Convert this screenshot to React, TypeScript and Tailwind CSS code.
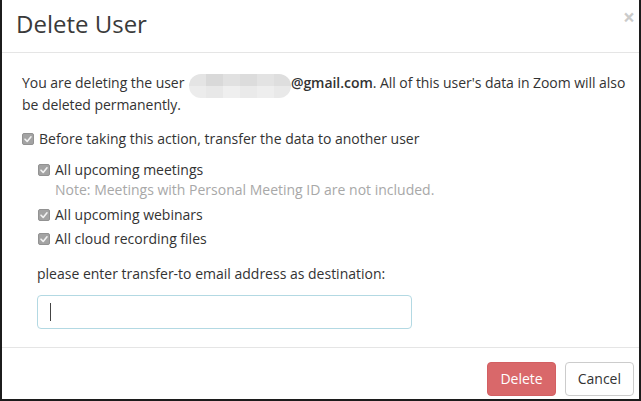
import { ReactNode } from 'react';

function Check({ children }: { children: ReactNode }) {
  return (
    <div className="flex items-center h-[20px]">
      <span className="w-[12px] h-[12px] rounded-[2px] bg-[#a3a3a3] border border-[#929292] flex items-center justify-center shrink-0">
        <svg width="10" height="10" viewBox="0 0 10 10">
          <polyline points="2,5.2 4.2,7.4 8,2.8" fill="none" stroke="#f2f2f2" strokeWidth="1.6" strokeLinecap="round" strokeLinejoin="round" />
        </svg>
      </span>
      <span className="ml-[5px]">{children}</span>
    </div>
  );
}

// blurred e-mail address
function BlurPill() {
  const top = ['bg-[#e4e4e4]', 'bg-[#d9d9d9]', 'bg-[#e1e1e1]', 'bg-[#dcdcdc]', 'bg-[#e3e3e3]', 'bg-[#dedede]'];
  const bottom = ['bg-[#ececec]', 'bg-[#e8e8e8]', 'bg-[#efefef]', 'bg-[#eaeaea]', 'bg-[#eeeeee]', 'bg-[#e9e9e9]'];
  return (
    <span className="inline-block align-[-7px] -my-[3px] ml-[1px] w-[102px] h-[24px] rounded-full overflow-hidden">
      <span className="flex h-1/2">
        {top.map((c, i) => (
          <span key={i} className={`flex-1 ${c}`} />
        ))}
      </span>
      <span className="flex h-1/2">
        {bottom.map((c, i) => (
          <span key={i} className={`flex-1 ${c}`} />
        ))}
      </span>
    </span>
  );
}

export default function App() {
  return (
    <div className="w-[641px] h-[401px] bg-white border-x-2 border-b-2 border-[#1c1c1c] flex flex-col font-['Open_Sans',sans-serif] text-[14px] text-[#333]">
      {/* Header */}
      <div className="h-[53px] shrink-0 border-b border-[#e5e5e5] flex justify-between items-start pl-[14px] pr-[4px]">
        <h4 className="pt-[6px] text-[24px] leading-[36px] text-[#3a3a3a]">Delete User</h4>
        <span className="mt-[7px] text-[21px] leading-[21px] font-bold text-black opacity-20">×</span>
      </div>

      {/* Body */}
      <div className="flex-1 pt-[20px] pl-[20px] pr-[4px]">
        <p className="leading-[20px] tracking-[-0.05px]">
          You are deleting the user <BlurPill />
          <span className="font-semibold">@gmail.com</span>. All of this user's data in Zoom will also be deleted permanently.
        </p>

        <div className="mt-[14px] leading-[20px]">
          <Check>Before taking this action, transfer the data to another user</Check>
          <div className="ml-[16px] mt-[11px]">
            <Check>All upcoming meetings</Check>
            <div className="pl-[17px] leading-[20px] text-[#a8a8a8]">Note: Meetings with Personal Meeting ID are not included.</div>
            <div className="mt-[5px]">
              <Check>All upcoming webinars</Check>
            </div>
            <div className="mt-[4px]">
              <Check>All cloud recording files</Check>
            </div>
          </div>

          <div className="ml-[15px] mt-[15px]">
            <div className="leading-[20px]">please enter transfer-to email address as destination:</div>
            <div className="mt-[11px] w-[375px] h-[34px] rounded-[4px] border border-[#b3d9e3] flex items-center px-[12px]">
              <span className="w-px h-[18px] bg-[#444]" />
            </div>
          </div>
        </div>
      </div>

      {/* Footer */}
      <div className="shrink-0 border-t border-[#e5e5e5] pt-[14px] pb-[3px] pr-[5px] flex justify-end gap-[9px]">
        <button className="h-[34px] px-[12px] rounded-[4px] bg-[#d9686a] border border-[#d35f62] text-white leading-[20px]">Delete</button>
        <button className="h-[34px] px-[12px] rounded-[4px] bg-white border border-[#cccccc] text-[#333] leading-[20px]">Cancel</button>
      </div>
    </div>
  );
}
